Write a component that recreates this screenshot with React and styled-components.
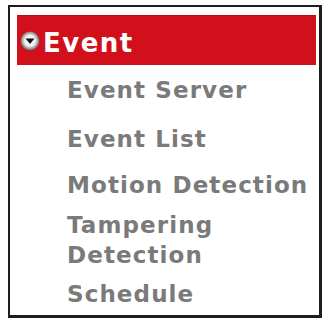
import React from "react";
import styled, { createGlobalStyle } from "styled-components";

const Global = createGlobalStyle`
  html, body { margin: 0; padding: 0; background: #ffffff; }
  body { font-family: "DejaVu Sans", Verdana, sans-serif; }
`;

const Frame = styled.div`
  box-sizing: border-box;
  margin: 5px 0 0 8px;
  width: 314px;
  height: 313px;
  border: 2px solid #1e1e1e;
  border-right-width: 3px;
  border-bottom-width: 3px;
  background: #fff;
  padding: 8px 3px 0 7px;
`;

const Header = styled.div`
  display: flex;
  align-items: center;
  height: 50px;
  box-sizing: border-box;
  padding-left: 3px;
  background: #d1101b;
  border-top: 1px solid #b50b14;
`;

const Title = styled.span`
  margin-left: 3px;
  padding-top: 5px;
  font-size: 26px;
  line-height: 26px;
  font-weight: bold;
  letter-spacing: 1.5px;
  color: #ffffff;
`;

const List = styled.ul`
  list-style: none;
  margin: 0;
  padding: 0 0 0 50px;
`;

const Item = styled.li`
  margin-top: ${(p) => p.$gap}px;
  font-size: 23px;
  line-height: 30px;
  font-weight: bold;
  letter-spacing: 1.1px;
  color: #7a7a7a;
`;

const Toggle = () => (
  <svg width="20" height="20" viewBox="0 0 20 20">
    <defs>
      <radialGradient id="g" cx="50%" cy="48%" r="52%">
        <stop offset="0%" stopColor="#ffffff" />
        <stop offset="55%" stopColor="#f2f0f0" />
        <stop offset="85%" stopColor="#9a8f90" />
        <stop offset="100%" stopColor="#5a4f50" />
      </radialGradient>
    </defs>
    <circle cx="10" cy="10" r="9.5" fill="url(#g)" />
    <path d="M5.5 7.5 L14.5 7.5 L10 13 Z" fill="#111" />
  </svg>
);

const items = [
  { label: "Event Server", gap: 10 },
  { label: "Event List", gap: 19 },
  { label: "Motion Detection", gap: 16 },
  { label: "Tampering Detection", gap: 10 },
  { label: "Schedule", gap: 9 },
];

export default function App() {
  return (
    <>
      <Global />
      <Frame>
        <Header>
          <Toggle />
          <Title>Event</Title>
        </Header>
        <List>
          {items.map((it) => (
            <Item key={it.label} $gap={it.gap}>
              {it.label}
            </Item>
          ))}
        </List>
      </Frame>
    </>
  );
}
